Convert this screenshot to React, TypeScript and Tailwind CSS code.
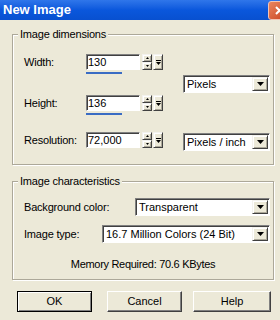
import React from 'react';

// classic win32 bevels
const sunken =
  'border border-t-[#808080] border-l-[#808080] border-b-white border-r-white shadow-[inset_1px_1px_0_#404040]';
const raised =
  'bg-[#ece9d8] border border-t-[#f4f3ee] border-l-[#f4f3ee] border-b-[#404040] border-r-[#404040] shadow-[inset_1px_1px_0_#fff,inset_-1px_-1px_0_#aca899]';

const DownTri = ({ w = 7 }: { w?: number }) => (
  <svg width={w} height={Math.ceil(w / 2)} viewBox={`0 0 ${w} ${Math.ceil(w / 2)}`}>
    <polygon points={`0,0 ${w},0 ${w / 2},${Math.ceil(w / 2)}`} fill="#000" />
  </svg>
);

const UpTri = ({ w = 5 }: { w?: number }) => (
  <svg width={w} height={Math.ceil(w / 2)} viewBox={`0 0 ${w} ${Math.ceil(w / 2)}`}>
    <polygon points={`0,${Math.ceil(w / 2)} ${w},${Math.ceil(w / 2)} ${w / 2},0`} fill="#000" />
  </svg>
);

const SpinField = ({ value, bar }: { value: string; bar?: boolean }) => (
  <div className="flex flex-col">
    <div className="flex h-[16px] items-stretch">
      <div className={`w-[54px] bg-white pl-[1px] text-[11px] leading-[14px] ${sunken}`}>{value}</div>
      <div className="ml-[2px] flex w-[10px] flex-col">
        <div className={`flex h-[8px] items-center justify-center ${raised}`}>
          <UpTri w={3} />
        </div>
        <div className={`flex h-[8px] items-center justify-center ${raised}`}>
          <DownTri w={3} />
        </div>
      </div>
      <div className={`ml-[1px] flex w-[10px] flex-col items-center justify-center gap-[1px] ${raised}`}>
        <div className="h-[1px] w-[5px] bg-black" />
        <DownTri w={5} />
      </div>
    </div>
    {bar ? <div className="mt-[2px] h-[2px] w-[36px] bg-[#3a6cc4]" /> : <div className="mt-[2px] h-[2px]" />}
  </div>
);

const Dropdown = ({ value, className }: { value: string; className: string }) => (
  <div className={`flex h-[18px] items-stretch bg-white ${sunken} ${className}`}>
    <div className="flex-1 truncate pl-[3px] text-[11px] leading-[16px]">{value}</div>
    <div className={`my-[1px] mr-[1px] flex w-[16px] items-center justify-center ${raised}`}>
      <DownTri w={7} />
    </div>
  </div>
);

const Group = ({ title, className, children }: { title: string; className: string; children: React.ReactNode }) => (
  <div
    className={`relative ml-[12px] w-[262px] border border-[#aca899] shadow-[inset_1px_1px_0_#fff,1px_1px_0_#fff] ${className}`}
  >
    <span className="absolute left-[5px] top-[-7px] bg-[#ece9d8] px-[2px] leading-[13px] tracking-[-0.2px]">
      {title}
    </span>
    {children}
  </div>
);

const Button = ({ label, primary, className }: { label: string; primary?: boolean; className: string }) => (
  <div
    className={`flex h-[21px] items-center justify-center bg-[#ece9d8] ${
      primary
        ? 'border border-black shadow-[inset_1px_1px_0_#fff,inset_-1px_-1px_0_#808080]'
        : 'border border-t-white border-l-white border-b-[#404040] border-r-[#404040] shadow-[inset_-1px_-1px_0_#808080]'
    } ${className}`}
  >
    {label}
  </div>
);

export default function App() {
  return (
    <div className="h-[320px] w-[280px] overflow-hidden bg-[#ece9d8] font-['Liberation_Sans',Arial,sans-serif] text-[11px] text-black">
      {/* Title bar */}
      <div className="flex h-[20px] items-center justify-between overflow-hidden bg-gradient-to-b from-[#2f76ea] via-[#0a57dc] to-[#0850d0]">
        <span className="pl-[3px] text-[13px] font-bold leading-[20px] text-white">New Image</span>
        <div className="mr-[-10px] mt-[1px] flex h-[19px] w-[22px] shrink-0 items-center justify-center rounded-[3px] border border-[#f2c4b4] bg-gradient-to-br from-[#e9855f] to-[#c8401c]">
          <svg width="9" height="9" viewBox="0 0 9 9">
            <path d="M1 1 L8 8 M8 1 L1 8" stroke="#fff" strokeWidth="2" />
          </svg>
        </div>
      </div>

      {/* Image dimensions */}
      <Group title="Image dimensions" className="mt-[14px] h-[131px]">
        <div className="flex pl-[11px] pt-[19px]">
          <div className="flex w-[139px] flex-col">
            <div className="flex">
              <span className="w-[63px] leading-[16px] tracking-[-0.2px]">Width:</span>
              <SpinField value="130" bar />
            </div>
            <div className="mt-[21px] flex">
              <span className="w-[63px] leading-[16px] tracking-[-0.2px]">Height:</span>
              <SpinField value="136" bar />
            </div>
            <div className="mt-[17px] flex">
              <span className="w-[63px] leading-[16px] tracking-[-0.2px]">Resolution:</span>
              <SpinField value="72,000" />
            </div>
          </div>
          <div className="ml-[20px] flex flex-col">
            <Dropdown value="Pixels" className="mt-[21px] w-[87px]" />
            <Dropdown value="Pixels / inch" className="mt-[40px] w-[87px]" />
          </div>
        </div>
      </Group>

      {/* Image characteristics */}
      <Group title="Image characteristics" className="mt-[16px] h-[99px]">
        <div className="flex flex-col pl-[11px] pt-[16px]">
          <div className="flex items-center">
            <span className="w-[111px] tracking-[-0.2px]">Background color:</span>
            <Dropdown value="Transparent" className="w-[135px]" />
          </div>
          <div className="mt-[9px] flex items-center">
            <span className="w-[78px] tracking-[-0.2px]">Image type:</span>
            <Dropdown value="16.7 Million Colors (24 Bit)" className="w-[168px]" />
          </div>
          <div className="mr-[11px] mt-[15px] text-center leading-[13px] tracking-[-0.3px]">
            Memory Required: 70.6 KBytes
          </div>
        </div>
      </Group>

      {/* Buttons */}
      <div className="ml-[17px] mt-[11px] flex">
        <Button label="OK" primary className="w-[75px]" />
        <Button label="Cancel" className="ml-[15px] w-[75px]" />
        <Button label="Help" className="ml-[11px] w-[78px]" />
      </div>
    </div>
  );
}
